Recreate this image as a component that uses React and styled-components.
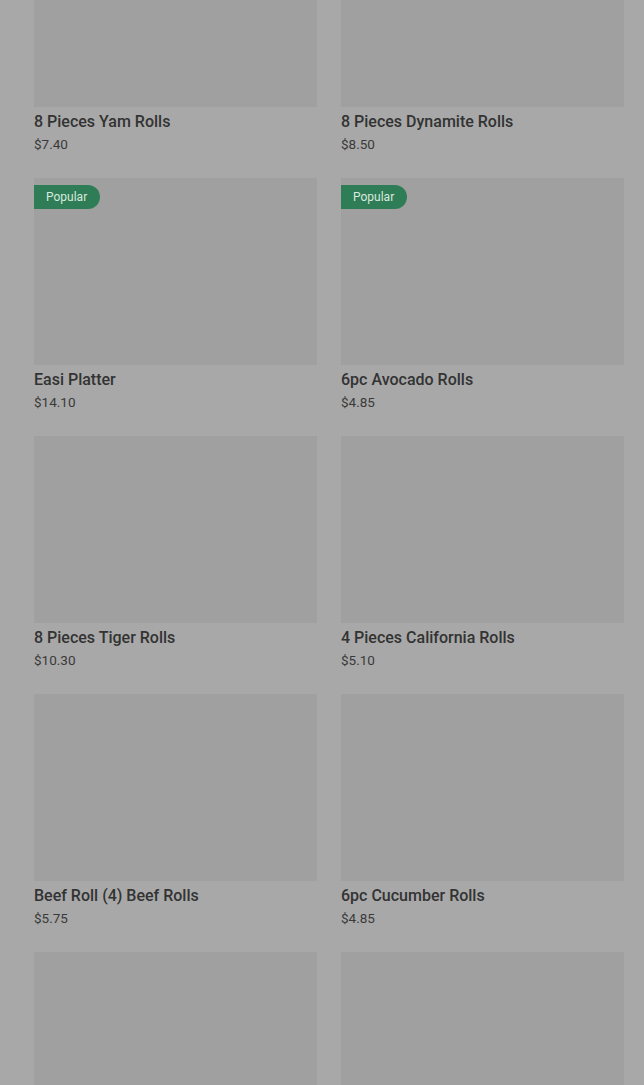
import React from "react";
import styled, { createGlobalStyle } from "styled-components";

const Global = createGlobalStyle`
  html, body { margin: 0; padding: 0; background: #a8a8a8; }
  body { font-family: Roboto, "Noto Sans", "Liberation Sans", sans-serif; overflow: hidden; }
`;

const Page = styled.div`
  width: 644px;
  height: 1085px;
  overflow: hidden;
  background: #a8a8a8;
  box-sizing: border-box;
  padding: 0 20px 0 34px;
`;

const Grid = styled.div`
  display: grid;
  grid-template-columns: 283px 283px;
  column-gap: 24px;
  row-gap: 24px;
  margin-top: -80px;
`;

const Card = styled.div`
  display: flex;
  flex-direction: column;
`;

const Thumb = styled.div`
  position: relative;
  height: 187px;
  background: #a0a0a0;
`;

const Badge = styled.span`
  position: absolute;
  left: 0;
  top: 7px;
  height: 24px;
  padding: 0 13px 0 12px;
  display: flex;
  align-items: center;
  background: #2f7d56;
  color: #d8e9df;
  font-size: 12px;
  border-radius: 0 12px 12px 0;
`;

const Title = styled.div`
  margin-top: 4px;
  font-size: 16px;
  line-height: 22px;
  font-weight: 500;
  color: #333333;
`;

const Price = styled.div`
  margin-top: 1px;
  font-size: 13.5px;
  line-height: 20px;
  color: #3a3a3a;
`;

const items = [
  { name: "8 Pieces Yam Rolls", price: "$7.40" },
  { name: "8 Pieces Dynamite Rolls", price: "$8.50" },
  { name: "Easi Platter", price: "$14.10", popular: true },
  { name: "6pc Avocado Rolls", price: "$4.85", popular: true },
  { name: "8 Pieces Tiger Rolls", price: "$10.30" },
  { name: "4 Pieces California Rolls", price: "$5.10" },
  { name: "Beef Roll (4) Beef Rolls", price: "$5.75" },
  { name: "6pc Cucumber Rolls", price: "$4.85" },
  { name: "", price: "" },
  { name: "", price: "" },
];

export default function App() {
  return (
    <>
      <Global />
      <Page>
        <Grid>
          {items.map((it, i) => (
            <Card key={i}>
              <Thumb>{it.popular && <Badge>Popular</Badge>}</Thumb>
              {it.name && <Title>{it.name}</Title>}
              {it.price && <Price>{it.price}</Price>}
            </Card>
          ))}
        </Grid>
      </Page>
    </>
  );
}
